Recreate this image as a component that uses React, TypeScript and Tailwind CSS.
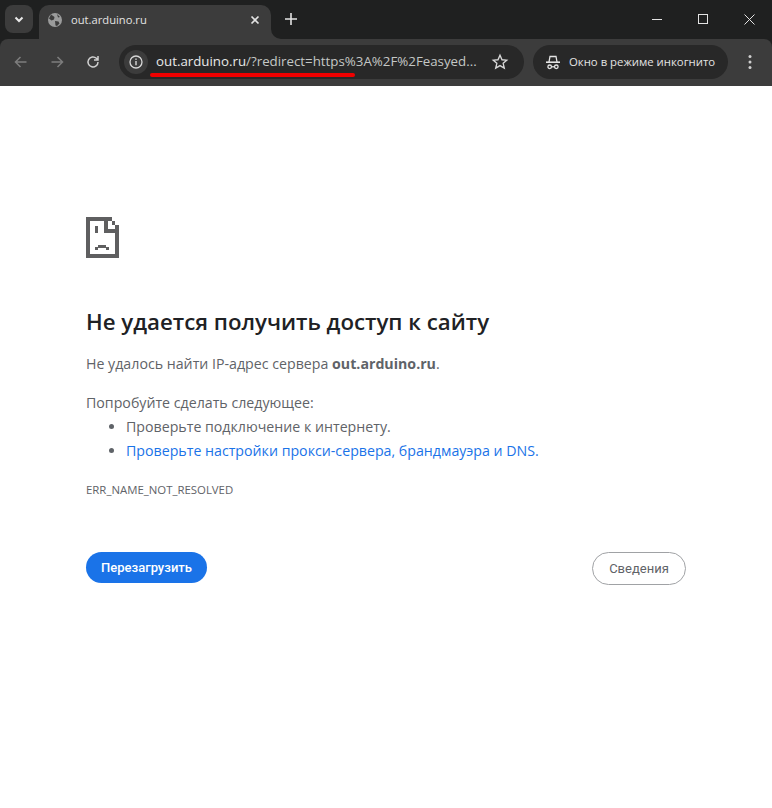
import React from "react";

function SadPage() {
  return (
    <svg width="33" height="41" viewBox="0 0 33 41" fill="#5f5f60" shapeRendering="crispEdges">
      <rect x="0" y="0" width="4" height="41" />
      <rect x="0" y="37" width="33" height="4" />
      <rect x="29" y="12" width="4" height="29" />
      <rect x="0" y="0" width="26" height="4" />
      <rect x="18" y="0" width="4" height="16" />
      <rect x="18" y="12" width="15" height="4" />
      <rect x="26" y="4" width="3" height="4" />
      <rect x="29" y="8" width="4" height="4" />
      <rect x="9" y="9" width="3" height="7" />
      <rect x="9" y="30" width="3" height="3" />
      <rect x="12" y="28" width="8" height="3" />
      <rect x="20" y="30" width="3" height="3" />
    </svg>
  );
}

export default function App() {
  return (
    <div className="w-[772px] h-[808px] bg-white flex flex-col overflow-hidden font-['Open_Sans',sans-serif]">
      <div className="bg-[#1f2020] shrink-0">
        {/* Tab strip */}
        <div className="h-[39px] flex items-end relative">
          <div className="ml-[5px] mb-[6px] w-[28px] h-[28px] rounded-lg bg-[#3c3c3c] flex items-center justify-center text-white">
            <svg width="12" height="12" viewBox="0 0 12 12" fill="none" stroke="#e8e8e8" strokeWidth="2"><path d="M2.500 4.500 6 8l3.500-3.500" /></svg>
          </div>
          <div className="ml-[6px] w-[232px] h-[34px] rounded-t-[10px] bg-[#3c3c3c] flex items-center pl-[9px] pr-[9px] pb-[4px] relative">
            <svg width="14" height="14" viewBox="0 0 14 14" className="shrink-0">
              <circle cx="7" cy="7" r="7" fill="#9b9c9c" />
              <path d="M3 1.500 6.500 4 6 6.500 3.500 7.500 1 5.500ZM7 8l3.500.5 1 2-2.500 2.500-1.500-.5ZM9 1l3 3-2 .5Z" fill="#3c3c3c" />
            </svg>
            <span className="ml-[9px] text-[11.2px] leading-none text-[#e3e3e3] flex-1">out.arduino.ru</span>
            <svg width="10" height="10" viewBox="0 0 10 10" stroke="#e3e3e3" strokeWidth="1.700" className="mr-[2px]"><path d="M1.500 1.500l7 7M8.500 1.500l-7 7" /></svg>
            <svg width="10" height="10" viewBox="0 0 10 10" className="absolute left-full bottom-0"><path d="M0 0a10 10 0 0 0 10 10H0Z" fill="#3c3c3c" /></svg>
          </div>
          <div className="ml-[14px] mb-[14px]">
            <svg width="12" height="12" viewBox="0 0 12 12" stroke="#e3e3e3" strokeWidth="1.600"><path d="M6 0v12M0 6h12" /></svg>
          </div>
          <div className="ml-auto h-[39px] flex items-center pb-[1px]">
            <div className="w-[46px] flex justify-center">
              <div className="w-[10px] h-px bg-[#e3e3e3]" />
            </div>
            <div className="w-[46px] flex justify-center">
              <div className="w-[10px] h-[10px] border border-[#e3e3e3]" />
            </div>
            <div className="w-[46px] flex justify-center">
              <svg width="11" height="11" viewBox="0 0 11 11" stroke="#e3e3e3" strokeWidth="1"><path d="M.5.5l10 10M10.500.5l-10 10" /></svg>
            </div>
          </div>
        </div>
        {/* Toolbar */}
        <div className="h-[47px] bg-[#3c3c3c] rounded-t-[8px] flex items-center pl-[13px] pb-[1px] relative">
          <svg width="16" height="16" viewBox="0 0 16 16" fill="none" stroke="#7d7d7d" strokeWidth="1.500"><path d="M13.500 8h-11M7.500 3l-5 5 5 5" /></svg>
          <svg width="16" height="16" viewBox="0 0 16 16" fill="none" stroke="#7d7d7d" strokeWidth="1.500" className="ml-[20px]"><path d="M2.500 8h11M8.500 3l5 5-5 5" /></svg>
          <svg width="16" height="16" viewBox="0 0 16 16" fill="none" stroke="#cfcfcf" strokeWidth="1.500" className="ml-[20px]"><path d="M13 8a5 5 0 1 1-1.600-3.700L13 5.800M13 2v4H9" /></svg>
          <div className="ml-[18px] w-[405px] h-[34px] rounded-full bg-[#282828] flex items-center pl-[5px] relative">
            <div className="w-[24px] h-[24px] rounded-full bg-[#3c3c3c] flex items-center justify-center shrink-0">
              <svg width="14" height="14" viewBox="0 0 14 14" fill="none"><circle cx="7" cy="7" r="6" stroke="#d8d8d8" strokeWidth="1.300" /><path d="M7 6v4.200" stroke="#d8d8d8" strokeWidth="1.400" /><rect x="6.300" y="3.500" width="1.400" height="1.400" fill="#d8d8d8" /></svg>
            </div>
            <span className="ml-[8px] text-[13.3px] leading-none whitespace-nowrap text-[#c4c7c5]"><span className="text-[#e8e8e8]">out.arduino.ru</span>/?redirect=https%3A%2F%2Feasyed...</span>
            <svg width="18" height="18" viewBox="0 0 24 24" fill="none" stroke="#d8d8d8" strokeWidth="1.800" className="absolute right-[15px] top-[8px]"><path d="m12 3 2.700 6 6.300.6-4.800 4.200 1.500 6.400L12 16.800 6.300 20.200l1.500-6.400L3 9.600 9.300 9Z" /></svg>
            <div className="absolute left-[31px] top-[28px] w-[205px] h-[4px] rounded-full bg-[#f00000]" />
          </div>
          <div className="ml-[9px] w-[195px] h-[34px] rounded-full bg-[#282828] flex items-center pl-[12px] shrink-0">
            <svg width="16" height="16" viewBox="0 0 16 16" fill="none" stroke="#e3e3e3" strokeWidth="1.300"><path d="M1 8.200h14" strokeWidth="1.600" /><path d="M4 8 5 2.500h6L12 8" /><circle cx="4.700" cy="12.800" r="1.800" /><circle cx="11.300" cy="12.800" r="1.800" /><path d="M6.500 12.800h3" /></svg>
            <span className="ml-[8px] text-[11.35px] leading-none text-[#e3e3e3] whitespace-nowrap">Окно в режиме инкогнито</span>
          </div>
          <svg width="4" height="16" viewBox="0 0 4 16" fill="#d0d0d0" className="ml-[20px]"><circle cx="2" cy="2.500" r="1.500" /><circle cx="2" cy="8" r="1.500" /><circle cx="2" cy="13.500" r="1.500" /></svg>
        </div>
      </div>
      {/* Page */}
      <div className="flex-1 pl-[86px] pr-[86px] pt-[131px] text-[14.2px] text-[#5f6368]">
        <SadPage />
        <h1 className="mt-[49px] text-[22.25px] leading-[30px] font-semibold text-[#202124] whitespace-nowrap">Не удается получить доступ к сайту</h1>
        <p className="mt-[16px] leading-[22px] whitespace-nowrap">Не удалось найти IP-адрес сервера <b className="font-bold">out.arduino.ru</b>.</p>
        <p className="mt-[17px] leading-[22px]">Попробуйте сделать следующее:</p>
        <ul className="list-disc pl-[40px] mt-[2px] leading-[22px]">
          <li className="pb-[2px]">Проверьте подключение к интернету.</li>
          <li className="pb-[2px]"><span className="text-[#1a73e8]">Проверьте настройки прокси-сервера, брандмауэра и DNS.</span></li>
        </ul>
        <div className="mt-[18px] text-[11.4px] leading-[16px] text-[#5f6368]">ERR_NAME_NOT_RESOLVED</div>
        <div className="mt-[54px] flex justify-between items-start font-['Roboto',sans-serif] text-[13px]">
          <button className="w-[121px] h-[31px] rounded-full bg-[#1a73e8] text-white font-medium">Перезагрузить</button>
          <button className="w-[94px] h-[33px] rounded-full border border-[#a0a2a5] bg-white text-[#5f6368]">Сведения</button>
        </div>
      </div>
    </div>
  );
}
